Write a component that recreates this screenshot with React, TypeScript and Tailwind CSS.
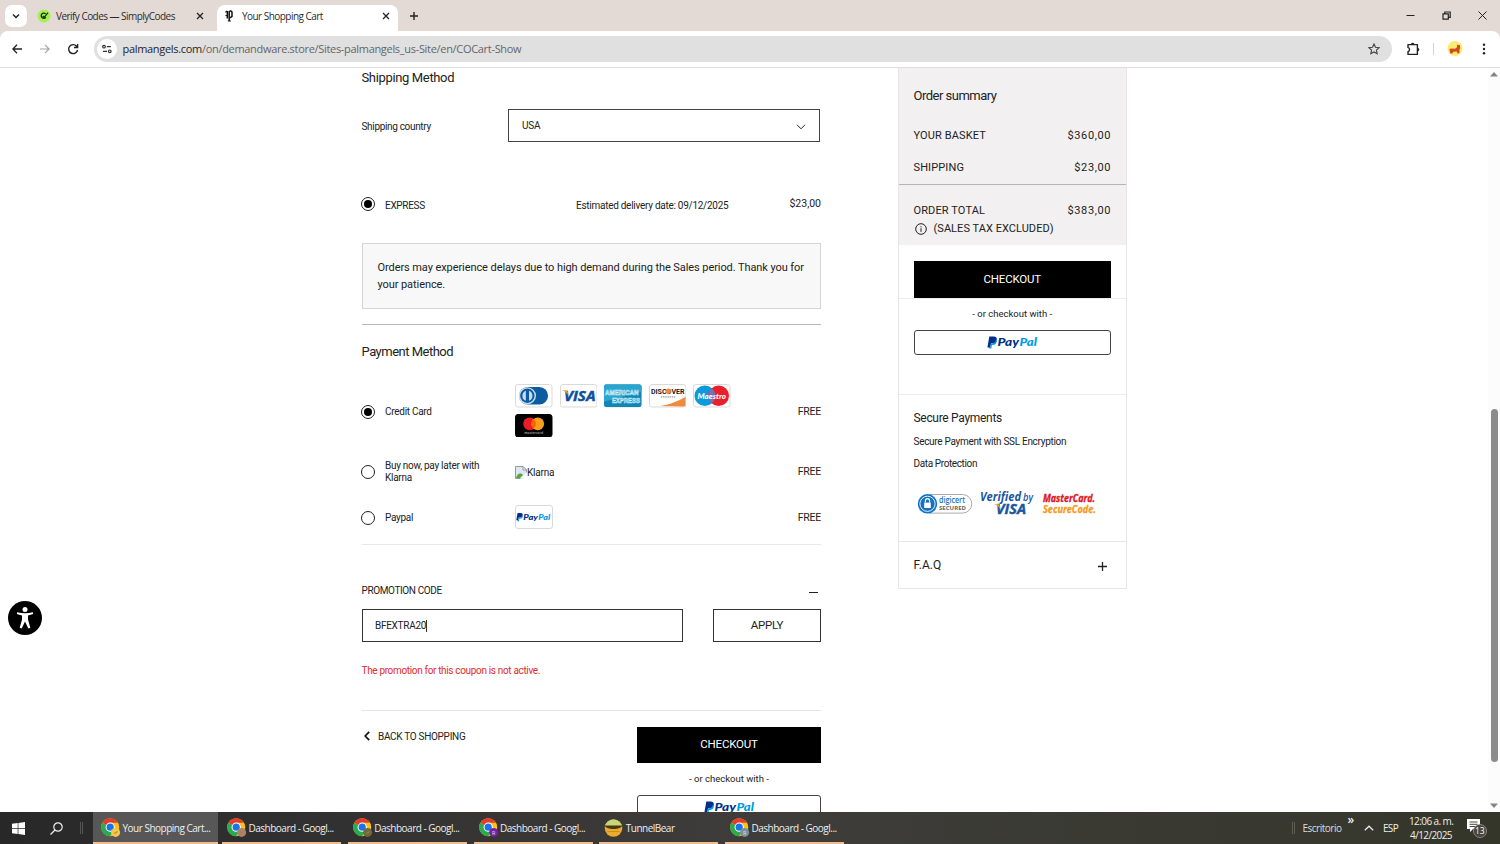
import type { ReactNode } from "react";
import { clsx } from "clsx";

const taskbarApps = [
  { title: "Your Shopping Cart...", badge: "#f3c94b", letter: "", active: true },
  { title: "Dashboard - Googl...", badge: "#a98270", letter: "" },
  { title: "Dashboard - Googl...", badge: "#6b6b3c", letter: "" },
  { title: "Dashboard - Googl...", badge: "#7b1fa2", letter: "R" },
  { title: "TunnelBear", bear: true },
  { title: "Dashboard - Googl...", badge: "#78909c", letter: "R" },
];

function ChromeIcon({ badge, letter }: { badge?: string; letter?: string }) {
  return (
    <svg viewBox="0 0 20 20" className="h-5 w-5 shrink-0">
      <circle cx="9.2" cy="9.2" r="9" fill="#fbc116" />
      <path d="M9.2 9.2 1.4 4.7A9 9 0 0 1 17 4.7Z" fill="#e33b2e" />
      <path d="M9.2 9.2 1.4 4.7A9 9 0 0 0 9.2 18.2l4-7Z" fill="#2da94f" />
      <path d="M9.2 4.7H17L13 11.4Z" fill="#fbc116" />
      <circle cx="9.2" cy="9.2" r="4.6" fill="#fff" />
      <circle cx="9.2" cy="9.2" r="3.6" fill="#1a73e8" />
      <circle cx="14.6" cy="14.4" r="4.5" fill={badge} />
      {letter && (
        <text x="14.6" y="16.5" fontSize="5.5" textAnchor="middle" fill="#ddd" fontFamily="Open Sans, sans-serif">
          {letter}
        </text>
      )}
      {!letter && <path d="M12.4 15.2c1 .8 3 .6 4-.6l.4-1.8-1.6.8Z" fill="#d96a2b" opacity=".7" />}
    </svg>
  );
}

function BearIcon() {
  return (
    <svg viewBox="0 0 20 20" className="h-5 w-5 shrink-0">
      <circle cx="9.5" cy="10" r="8.8" fill="#e9ac2d" />
      <path d="M.9 8.4a8.8 8.8 0 0 1 17.2 0Z" fill="#c5d67b" />
      <path d="M.8 7.5h17.4c-.4 4.6-17 4.6-17.4 0Z" fill="#4b3810" />
      <path d="M3.5 13.5h12" stroke="#c98d1c" />
    </svg>
  );
}

function PayPalLogo({ className }: { className?: string }) {
  return (
    <svg viewBox="0 0 51 13" className={className}>
      <path d="M2.3 .6h4.4c2.4 0 3.5 1.3 3 3.4-.5 2.3-2 3.3-4.3 3.3H4l-.7 4.1H.4Z" fill="#003087" />
      <path d="M8.9 3.2c.9.6 1.1 1.6.8 2.8-.5 2-1.9 2.900-3.900 2.900h-.9l-.6 3.700H2l.3-1.700h1.200l.7-3.600h1.500c2 0 3.100-1.300 3.200-4.100Z" fill="#009cde" />
      <g fontSize="12" fontWeight="900" fontStyle="italic" fontFamily="Lato, sans-serif">
        <text x="10.5" y="10.3" fill="#003087" textLength="21.5" lengthAdjust="spacingAndGlyphs">
          Pay
        </text>
        <text x="32.5" y="10.3" fill="#009cde" textLength="17.5" lengthAdjust="spacingAndGlyphs">
          Pal
        </text>
      </g>
    </svg>
  );
}

function Card({ children, black }: { children: ReactNode; black?: boolean }) {
  return (
    <svg viewBox="0 0 38 24" preserveAspectRatio="none" className="h-[23.5px] w-[37.5px]">
      <rect x=".5" y=".5" width="37" height="23" rx="2.5" fill={black ? "#000" : "#fff"} stroke={black ? "#000" : "#d9d9d9"} />
      {children}
    </svg>
  );
}

function CardIcons() {
  return (
    <div className="-mt-[3px] flex w-[250px] flex-wrap gap-x-[7.1px] gap-y-[6px]">
      <Card>
        <rect x="4" y="3" width="29.5" height="18" rx="9" fill="#0a5ba0" />
        <circle cx="12.5" cy="12" r="8.8" fill="#c9dcec" />
        <circle cx="12.5" cy="12" r="7.3" fill="#0a5ba0" />
        <path d="M11 6.8v10.4a5.6 5.6 0 0 1 0-10.4ZM14.2 6.8v10.4a5.6 5.6 0 0 0 0-10.4Z" fill="#c9dcec" />
      </Card>
      <Card>
        <text x="4" y="17.3" fontSize="15" fontWeight="700" fontStyle="italic" fill="#0f4f9e" stroke="#0f4f9e" strokeWidth=".5" textLength="32" lengthAdjust="spacingAndGlyphs" fontFamily="Open Sans, sans-serif">
          VISA
        </text>
        <path d="M2 6.500h5l2 5.500C7.500 9.500 5 7.500 2 6.500Z" fill="#f2a32c" />
      </Card>
      <Card>
        <rect x="0" y=".5" width="38" height="23" rx="2" fill="#0f86b6" />
        <path d="M0 2.5a2 2 0 0 1 2-2h34a2 2 0 0 1 2 2V8L0 18Z" fill="#2aa5cf" />
        <g fill="#3aa6cc" stroke="#d6eff8" strokeWidth=".6" fontSize="7.5" fontWeight="700" fontFamily="Liberation Sans, sans-serif">
          <text x="1" y="11" textLength="34" lengthAdjust="spacingAndGlyphs">AMERICAN</text>
          <text x="8" y="19" textLength="28.5" lengthAdjust="spacingAndGlyphs">EXPRESS</text>
        </g>
      </Card>
      <Card>
        <path d="M11.5 22.5C22 20.5 30 17.5 37 13v8a2 2 0 0 1-2 2Z" fill="#f08a3c" />
        <text x="2" y="9.8" fontSize="7.5" fontWeight="700" fill="#222" textLength="34" lengthAdjust="spacingAndGlyphs" fontFamily="Roboto, sans-serif">
          DISCOVER
        </text>
        <circle cx="19.5" cy="7.2" r="2.700" fill="#f08a3c" />
        <path d="M12 13.2h15" stroke="#777" strokeWidth=".9" strokeDasharray="1.5 .7" />
      </Card>
      <Card>
        <circle cx="12" cy="12" r="10.5" fill="#0d9ada" />
        <circle cx="26" cy="12" r="10.5" fill="#e8202e" />
        <path d="M19 4.2a10.5 10.5 0 0 1 0 15.6 10.5 10.5 0 0 1 0-15.6Z" fill="#7673b5" />
        <text x="4.5" y="15" fontSize="8" fontWeight="900" fontStyle="italic" fill="#fff" textLength="29" lengthAdjust="spacingAndGlyphs" fontFamily="Lato, sans-serif">
          Maestro
        </text>
      </Card>
      <Card black>
        <circle cx="14.8" cy="10" r="6.5" fill="#eb1c26" />
        <circle cx="23" cy="10" r="6.5" fill="#f79e1b" />
        <path d="M18.9 5a6.5 6.5 0 0 1 0 10 6.5 6.5 0 0 1 0-10Z" fill="#ff6200" />
        <text x="9.5" y="20" fontSize="4" fill="#ddd" textLength="19" lengthAdjust="spacingAndGlyphs" fontFamily="Open Sans, sans-serif">
          mastercard
        </text>
      </Card>
    </div>
  );
}

function Radio({ checked }: { checked?: boolean }) {
  return (
    <span className="-ml-px flex h-3.5 w-3.5 shrink-0 items-center justify-center rounded-full border border-[#222] bg-white">
      {checked && <span className="h-2 w-2 rounded-full bg-black" />}
    </span>
  );
}

function PaymentRow({ label, checked, className, children }: { label: string; checked?: boolean; className?: string; children: ReactNode }) {
  return (
    <div className={clsx("flex items-center", className)}>
      <Radio checked={checked} />
      <span className="ml-[10.5px] w-[130px] pr-6 text-[10px] leading-[12.5px] tracking-[-0.28px]">{label}</span>
      {children}
      <span className="ml-auto text-[10.5px] tracking-[-0.25px]">FREE</span>
    </div>
  );
}

function PayPalButton() {
  return (
    <button className="flex h-[25px] w-full items-center justify-center rounded-[3px] border border-[#444] bg-white">
      <PayPalLogo className="h-[13px] w-[51px]" />
    </button>
  );
}

function CloseIcon() {
  return (
    <svg viewBox="0 0 8 8" className="h-2 w-2 shrink-0" stroke="#222" strokeWidth="1.3">
      <path d="m1 1 6 6M7 1 1 7" />
    </svg>
  );
}

function TabStrip() {
  return (
    <div className="flex h-[31px] bg-[#e3dad6] text-[10px] text-[#2b2b2b]">
      <button className="mt-[5px] ml-[5px] flex h-[22px] w-[22px] items-center justify-center rounded-[7px] bg-white">
        <svg viewBox="0 0 8 8" className="h-2 w-2" fill="none" stroke="#222" strokeWidth="1.5">
          <path d="m1 2.5 3 3 3-3" />
        </svg>
      </button>
      <div className="flex w-[190px] items-center pl-[10px]">
        <svg viewBox="0 0 14 14" className="h-[14px] w-[14px]">
          <circle cx="7" cy="7" r="6.5" fill="#a5f04e" />
          <path d="M8.600 4.800A2.600 2.600 0 1 0 8.900 8.200" fill="none" stroke="#17320b" strokeWidth="1.300" />
          <path d="M11 3.600 7.200 8.300 5.700 6.900" fill="none" stroke="#17320b" strokeWidth="1.300" />
        </svg>
        <span className="mt-0.5 ml-[5px] w-[140px] tracking-[-0.54px] whitespace-nowrap">Verify Codes — SimplyCodes</span>
        <CloseIcon />
      </div>
      <div className="mt-[5px] flex h-[26px] w-[181px] items-center rounded-t-lg bg-white pb-[5px] pl-[7px]">
        <svg viewBox="0 0 10 12" className="h-3 w-[10px]">
          <path d="M3.300 1v7.500M5.200 1v10" fill="none" stroke="#111" strokeWidth="1.500" />
          <path d="M5.200 1.600 6.800.9 8 2v4.300L6 7.800" fill="none" stroke="#111" strokeWidth="1.500" />
          <path d="M1.400 2.200 3.300 1M1.500 5.500h1.800M3.800 11h3" stroke="#111" strokeWidth="1.100" />
        </svg>
        <span className="mt-0.5 ml-[8px] w-[140px] tracking-[-0.54px] whitespace-nowrap">Your Shopping Cart</span>
        <CloseIcon />
      </div>
      <svg viewBox="0 0 10 10" className="mt-[11px] ml-[11px] h-[10px] w-[10px]" stroke="#222" strokeWidth="1.4">
        <path d="M5 1v8M1 5h8" />
      </svg>
      <div className="ml-auto flex h-[31px] items-center gap-[27px] pr-[13.5px]">
        <svg viewBox="0 0 9 9" className="h-[9px] w-[9px]" stroke="#222">
          <path d="M.5 4.5h8" />
        </svg>
        <svg viewBox="0 0 9 9" className="h-[9px] w-[9px]" fill="none" stroke="#222" strokeWidth="1.2">
          <path d="M1 2.8h5.3v5.4H1ZM2.8 2.8V1h5.4v5.3H6.3" />
        </svg>
        <svg viewBox="0 0 9 9" className="h-[9px] w-[9px]" stroke="#222">
          <path d="m.5.5 8 8M8.5.5l-8 8" />
        </svg>
      </div>
    </div>
  );
}

function Toolbar() {
  return (
    <div className="bg-[#e3dad6]">
      <div className="flex h-[37px] items-center rounded-t-lg border-b border-[#dedede] bg-white pl-3">
        <svg viewBox="0 0 10 10" className="h-[10px] w-[10px]" fill="none" stroke="#222" strokeWidth="1.3">
          <path d="M10 5H1M5 .8.9 5 5 9.2" />
        </svg>
        <svg viewBox="0 0 10 10" className="ml-[18px] h-[10px] w-[10px]" fill="none" stroke="#a3a3a3" strokeWidth="1.2">
          <path d="M0 5h9M5 .8 9.1 5 5 9.2" />
        </svg>
        <svg viewBox="0 0 12 12" className="ml-[17px] h-3 w-3" fill="none" stroke="#222" strokeWidth="1.4">
          <path d="M10.6 7A4.5 4.5 0 1 1 9.6 3.2L10.5 4.3M10.6.9v3.6H7" />
        </svg>
        <div className="ml-[15px] flex h-[26px] w-[1298px] items-center rounded-full bg-[#e0e0e0] pl-[3px]">
          <span className="flex h-5 w-5 items-center justify-center rounded-full bg-white">
            <svg viewBox="0 0 10 10" className="h-[10px] w-[10px]" fill="none" stroke="#333" strokeWidth="1.2">
              <circle cx="2" cy="2.7" r="1.3" />
              <path d="M4.8 2.7h4M1 7.3h4" />
              <circle cx="7.8" cy="7.3" r="1.3" />
            </svg>
          </span>
          <span className="mt-px ml-[5.5px] text-[11px] tracking-[-0.31px] text-[#666]">
            <span className="text-[#1f1f1f]">palmangels.com</span>
            /on/demandware.store/Sites-palmangels_us-Site/en/COCart-Show
          </span>
          <svg viewBox="0 0 12 12" className="mr-[12.5px] ml-auto h-3 w-3" fill="none" stroke="#444" strokeWidth="1.1">
            <path d="m6 1 1.5 3.3 3.6.4-2.7 2.4.8 3.6L6 8.9l-3.2 1.8.8-3.6L.9 4.7l3.6-.4Z" />
          </svg>
        </div>
        <svg viewBox="0 0 14 14" className="ml-[14px] h-[14px] w-[14px]" fill="none" stroke="#222" strokeWidth="1.4" strokeLinejoin="round">
          <path d="M2 2.6h9.4v9.8H2V9.6c2-.3 2-3.9 0-4.2Z" />
          <path d="M5.6 2.3c.3-1.2 1.9-1.2 2.2 0M11.7 6.4c1.2.3 1.2 1.9 0 2.2" />
        </svg>
        <span className="ml-[13px] h-3 w-px bg-[#d8d0d0]" />
        <svg viewBox="0 0 16 16" className="ml-[13px] h-4 w-4">
          <circle cx="8" cy="7.5" r="7.5" fill="#fbea72" />
          <path d="M2.5 8 4 7.5l4 .2 2-1.4V3.5l1.5.8 1.3-.6.4 3.5-.8 1.5v3.6h-2l-.6-1.8-3.6.2-1 1.7H3.2Z" fill="#cf4a1c" />
        </svg>
        <svg viewBox="0 0 4 12" className="ml-[18.5px] h-3 w-1" fill="#222">
          <circle cx="2" cy="1.8" r="1.2" />
          <circle cx="2" cy="6" r="1.2" />
          <circle cx="2" cy="10.2" r="1.2" />
        </svg>
      </div>
    </div>
  );
}

function CheckoutForm() {
  return (
    <div className="ml-[361.5px] w-[459.5px]">
      <h2 className="h-5 text-[13px] leading-5 tracking-[-0.35px]">Shipping Method</h2>
      <div className="mt-[21px] flex h-[33px] items-center">
        <label className="mt-0.5 w-[146.5px] text-[10px] tracking-[-0.33px]">Shipping country</label>
        <div className="flex h-[33px] w-[312px] items-center justify-between border border-[#444] px-[13px] text-[10px] tracking-[-0.2px]">
          <span>USA</span>
          <svg viewBox="0 0 10 6" className="mt-0.5 h-1.5 w-[10px]" fill="none" stroke="#222">
            <path d="m1 .8 4 4 4-4" />
          </svg>
        </div>
      </div>

      <div className="mt-[46px] flex h-8 items-center">
        <Radio checked />
        <span className="mt-[3px] ml-[10.5px] w-[191px] text-[10px] tracking-[-0.3px]">EXPRESS</span>
        <span className="mt-[3px] text-[10px] tracking-[-0.27px]">Estimated delivery date: 09/12/2025</span>
        <span className="ml-auto text-[10.5px]">$23,00</span>
      </div>

      <p className="mt-[23px] h-[66px] border border-[#d4d4d4] bg-[#f8f8f8] px-[15px] pt-4 text-[11px] leading-[16.5px] tracking-[-0.08px] whitespace-nowrap">
        Orders may experience delays due to high demand during the Sales period. Thank you for
        <br />
        your patience.
      </p>

      <div className="mt-[15px] h-px bg-[#b8b8b8]" />
      <h2 className="mt-[17px] h-5 text-[13px] leading-5 tracking-[-0.5px]">Payment Method</h2>

      <PaymentRow label="Credit Card" checked className="mt-[21px] h-[58px]">
        <CardIcons />
      </PaymentRow>
      <PaymentRow label="Buy now, pay later with Klarna" className="mt-[16px] h-[30px]">
        <svg viewBox="0 0 12 13" className="h-[13px] w-3">
          <path d="M.5.5H8L11.5 4v8.5H.5Z" fill="#dbe7f6" stroke="#9a9a9a" />
          <path d="M1 12c1-4 4-6 7-3l-3 3Z" fill="#57a639" />
          <path d="M5 12.8 12 6v7Z" fill="#fff" />
          <path d="M8 .5V4h3.5Z" fill="#fff" stroke="#9a9a9a" />
        </svg>
        <span className="text-[10px] tracking-[-0.2px]">Klarna</span>
      </PaymentRow>
      <PaymentRow label="Paypal" className="mt-[16px] h-[30px]">
        <span className="-mt-0.5 flex h-6 w-[37.5px] items-center justify-center rounded-[3px] border border-[#d9d9d9]">
          <PayPalLogo className="h-[10px] w-[35px]" />
        </span>
      </PaymentRow>
      <div className="mt-[11px] h-px bg-[#e8e8e8]" />

      <div className="mt-[35px] flex h-5 items-center justify-between text-[10px] tracking-[-0.38px]">
        <span>PROMOTION CODE</span>
        <span className="mt-[5px] mr-[3.5px] h-[1.5px] w-[9px] bg-[#222]" />
      </div>
      <div className="mt-[9px] flex h-[33px] justify-between">
        <div className="flex w-[321.5px] items-center border border-[#333] pl-[12.5px] text-[10px] tracking-[-0.28px]">
          <span>BFEXTRA20</span>
          <span className="h-3 w-px bg-[#333]" />
        </div>
        <button className="w-[108px] border border-[#333] text-[11.5px] tracking-[-0.3px]">APPLY</button>
      </div>
      <p className="mt-[21px] h-4 text-[10px] leading-4 tracking-[-0.34px] text-[#e02b2b]">The promotion for this coupon is not active.</p>
      <div className="mt-[31px] h-px bg-[#e4e4e4]" />

      <div className="mt-4 flex justify-between">
        <a className="flex h-[19px] items-center text-[10px] tracking-[-0.3px]">
          <svg viewBox="0 0 6 10" className="mr-[8.5px] mb-px ml-[2px] h-[10px] w-1.5" fill="none" stroke="#111" strokeWidth="1.7">
            <path d="M5.2.8 1.2 5l4 4.2" />
          </svg>
          BACK TO SHOPPING
        </a>
        <div className="w-[184px]">
          <button className="h-[36px] w-full bg-black text-[11.5px] tracking-[-0.2px] text-white">CHECKOUT</button>
          <p className="py-2 text-center text-[9.5px] leading-4">- or checkout with -</p>
          <PayPalButton />
        </div>
      </div>
    </div>
  );
}

function SummaryRow({ label, value }: { label: string; value: string }) {
  return (
    <div className="flex h-4 items-center justify-between text-[11px]">
      <span className="tracking-[0.12px]">{label}</span>
      <span className="tracking-[0.6px]">{value}</span>
    </div>
  );
}

function OrderSummary() {
  return (
    <aside className="ml-[76.5px] h-[521px] w-[229.5px] border border-t-0 border-[#e6e6e6]">
      <div className="h-[177px] bg-[#f2f0f0]">
        <div className="h-[117px] border-b border-[#b5b5b5] px-[15px] pt-[18px]">
          <h2 className="h-5 text-[13px] leading-5 tracking-[-0.5px]">Order summary</h2>
          <div className="mt-[22px] space-y-4">
            <SummaryRow label="YOUR BASKET" value="$360,00" />
            <SummaryRow label="SHIPPING" value="$23,00" />
          </div>
        </div>
        <div className="px-[15px] pt-[18px]">
          <SummaryRow label="ORDER TOTAL" value="$383,00" />
          <div className="mt-0.5 flex h-4 items-center text-[11px] tracking-[0.05px]">
            <svg viewBox="0 0 12 12" className="mr-[7px] ml-[1px] h-3 w-3" fill="none" stroke="#222">
              <circle cx="6" cy="6" r="5.3" />
              <path d="M6 5.2v3.6M6 3.2v1.1" />
            </svg>
            (SALES TAX EXCLUDED)
          </div>
        </div>
      </div>
      <div className="px-[15px] pt-4">
        <button className="h-[37px] w-full bg-black text-[11.5px] tracking-[-0.2px] text-white">CHECKOUT</button>
      </div>
      <div className="h-[97px] border-y border-[#ececec] px-[15px] pt-[7px]">
        <p className="text-center text-[9.5px] leading-4">- or checkout with -</p>
        <div className="mt-2">
          <PayPalButton />
        </div>
      </div>
      <div className="h-[147px] border-b border-[#e6e6e6] px-[15px] pt-[13px]">
        <h3 className="h-5 text-[12px] leading-5 tracking-[-0.3px]">Secure Payments</h3>
        <p className="mt-[6px] text-[10px] leading-4 tracking-[-0.3px]">Secure Payment with SSL Encryption</p>
        <p className="mt-[6px] text-[10px] leading-4 tracking-[-0.38px]">Data Protection</p>
        <svg viewBox="0 0 184 30" className="mt-[16.5px] ml-[3.5px] h-[30px] w-[184px]" fontFamily="Open Sans, sans-serif">
          <path d="M12 5.5h33.5a9.3 9.3 0 0 1 0 18.6H12" fill="#fff" stroke="#aaa" />
          <circle cx="10.5" cy="14.8" r="9.7" fill="#1372c4" />
          <circle cx="10.5" cy="14.8" r="7.6" fill="none" stroke="#fff" strokeWidth=".9" />
          <rect x="7.2" y="13.6" width="6.6" height="5.4" fill="#fff" />
          <path d="M8.4 13.6v-1.8a2.1 2.1 0 0 1 4.2 0v1.8" fill="none" stroke="#fff" strokeWidth="1.2" />
          <text x="22" y="13.8" fontSize="8.5" fontWeight="600" fill="#1372c4" textLength="26" lengthAdjust="spacingAndGlyphs">digicert</text>
          <text x="22" y="21" fontSize="6" fontWeight="700" fill="#666" textLength="27" lengthAdjust="spacingAndGlyphs">SECURED</text>
          <g fontWeight="700" fontStyle="italic" fill="#1b55a0">
            <text x="63" y="11.8" fontSize="12" textLength="41" lengthAdjust="spacingAndGlyphs">Verified</text>
            <text x="106" y="11.8" fontSize="10" textLength="10" fontWeight="600" lengthAdjust="spacingAndGlyphs">by</text>
            <text x="79" y="25.3" fontSize="14" stroke="#1b55a0" strokeWidth=".4" textLength="30" lengthAdjust="spacingAndGlyphs">VISA</text>
          </g>
          <path d="M77 15.200h4.800l2 5.500c-1.300-2.700-3.300-4.400-6.800-5.500Z" fill="#f2a32c" />
          <g fontWeight="700" fontStyle="italic" fontSize="10.5" strokeWidth=".3">
            <text x="126" y="13.3" fill="#e0131e" stroke="#e0131e" textLength="52" lengthAdjust="spacingAndGlyphs">MasterCard.</text>
            <text x="126" y="23.8" fill="#f39a1d" stroke="#f39a1d" textLength="53" lengthAdjust="spacingAndGlyphs">SecureCode.</text>
          </g>
        </svg>
      </div>
      <div className="flex h-[46px] items-center justify-between pr-[19px] pl-[15px] text-[12px]">
        <span>F.A.Q</span>
        <svg viewBox="0 0 9 9" className="mt-0.5 h-[9px] w-[9px]" stroke="#222" strokeWidth="1.3">
          <path d="M4.5 0v9M0 4.5h9" />
        </svg>
      </div>
    </aside>
  );
}

function Scrollbar() {
  return (
    <div className="ml-auto flex h-full w-[12px] flex-col items-center bg-[#fcfcfc] pb-1">
      <svg viewBox="0 0 8 5" className="mt-1 h-[5px] w-2" fill="#858585">
        <path d="M4 0 8 4.5H0Z" />
      </svg>
      <div className="mt-[332px] h-[353px] w-[7px] rounded-full bg-[#8b8b8b]" />
      <svg viewBox="0 0 8 5" className="mt-auto h-[5px] w-2" fill="#858585">
        <path d="M0 .5h8L4 5Z" />
      </svg>
    </div>
  );
}

function Taskbar() {
  return (
    <footer className="flex h-8 items-stretch bg-linear-to-r from-[#292829] via-[#3e3d3b] via-50% to-[#35362a] text-[10px] text-[#eee]">
      <div className="flex w-[93px] items-center pl-3">
        <svg viewBox="0 0 13 13" className="h-[13px] w-[13px]" fill="#fff">
          <path d="M0 1.8 5.7 1v5.2H0ZM6.4.9 13 0v6.2H6.4ZM0 6.9h5.7V12L0 11.2ZM6.4 6.9H13V13l-6.6-.9Z" />
        </svg>
        <svg viewBox="0 0 13 13" className="ml-[25px] h-[13px] w-[13px]" fill="none" stroke="#eee" strokeWidth="1.2">
          <circle cx="8" cy="5" r="4.2" />
          <path d="M5 8 .5 12.5" />
        </svg>
        <span className="ml-[17px] h-3 w-[3px] border-x border-[#555]" />
      </div>
      {taskbarApps.map((app, i) => (
        <div
          key={i}
          className={clsx(
            "flex items-center border-b-2 border-[#f0bd93] pt-0.5 whitespace-nowrap",
            app.active ? "mr-1 w-[125px] bg-[#585757] pl-[8px]" : "mr-[6.75px] w-[119px] pl-[5px]"
          )}
        >
          {app.bear ? <BearIcon /> : <ChromeIcon badge={app.badge} letter={app.letter} />}
          <span className="ml-[1.5px] tracking-[-0.5px]">{app.title}</span>
        </div>
      ))}
      <div className="ml-auto flex items-center">
        <span className="h-3 w-[3px] border-x border-[#5c5c50]" />
        <span className="ml-[7.5px] w-[39px] tracking-[-0.5px] text-[#ddd]">Escritorio</span>
        <span className="mb-4 ml-[6px] w-[7px] text-xs leading-3 font-semibold">»</span>
        <svg viewBox="0 0 10 6" className="ml-[9px] h-1.5 w-[10px]" fill="none" stroke="#eee" strokeWidth="1.2">
          <path d="m.8 5.2 4.2-4 4.2 4" />
        </svg>
        <span className="ml-[9.5px] w-4 tracking-[-0.7px]">ESP</span>
        <span className="ml-[10px] w-[44px] text-center leading-[14px] tracking-[-0.6px] whitespace-nowrap">
          12:06 a. m.
          <br />
          4/12/2025
        </span>
        <svg viewBox="0 0 22 20" className="mr-[11px] ml-[14px] h-5 w-[22px]">
          <path d="M0 1h13v10H6l-3 3v-3H0Z" fill="#fff" />
          <path d="M2.500 4h8M2.500 6.300h8M2.500 8.500h8" stroke="#35362a" strokeWidth=".9" />
          <circle cx="13" cy="13" r="6.5" fill="#45463e" stroke="#999" strokeWidth=".8" />
          <text x="12.800" y="16" fontSize="8.500" fill="#fff" textAnchor="middle" fontFamily="Open Sans, sans-serif">
            13
          </text>
        </svg>
      </div>
    </footer>
  );
}

export default function App() {
  return (
    <div className="flex h-[844px] w-[1500px] flex-col overflow-hidden bg-white font-['Open_Sans',sans-serif]">
      <TabStrip />
      <Toolbar />
      <main className="relative flex h-[744px] overflow-hidden font-['Roboto',sans-serif] text-[#222]">
        <CheckoutForm />
        <OrderSummary />
        <Scrollbar />
        {/* Accessibility widget floats over the page */}
        <button className="absolute top-[533px] left-2 h-[34px] w-[34px] rounded-full bg-black">
          <svg viewBox="0 0 34 34" fill="#fff">
            <circle cx="17" cy="8.5" r="2.5" />
            <path d="M9.2 11.2c5 1.4 10.6 1.4 15.6 0l.4 1.9-5.2 1.3v4l2.3 8.3-2 .9L17 20.5l-3.3 7.1-2-.9 2.3-8.3v-4l-5.2-1.3Z" />
          </svg>
        </button>
      </main>
      <Taskbar />
    </div>
  );
}
